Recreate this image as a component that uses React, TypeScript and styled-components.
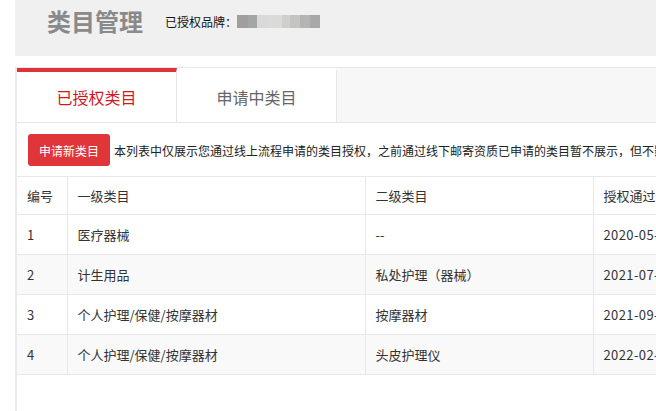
import React from "react";
import styled, { createGlobalStyle } from "styled-components";

const GlobalStyle = createGlobalStyle`
  html, body {
    margin: 0;
    padding: 0;
    background: #ffffff;
    overflow: hidden;
  }
  body {
    font-family: "Noto Sans CJK SC", "Noto Sans", sans-serif;
    color: #333;
  }
`;

const Page = styled.div`
  width: 1000px;
  padding-left: 15px;
  height: 411px;
  overflow: hidden;
`;

const Header = styled.header`
  height: 56px;
  box-sizing: border-box;
  padding: 4px 0 0 32px;
  background: #f0f0f0;
  display: flex;
  align-items: flex-start;
`;

const Title = styled.h1`
  margin: 0 22px 0 0;
  font-size: 24px;
  line-height: 34px;
  font-weight: 700;
  color: #8a8a8a;
`;

const Brand = styled.div`
  display: flex;
  align-items: center;
  height: 34px;
  font-size: 12px;
  color: #111;
`;

const Blurred = styled.span`
  display: inline-block;
  width: 83px;
  height: 13px;
  background: linear-gradient(
    90deg,
    #a19e9d 0 11px,
    #a3a6a4 11px 20px,
    #d9d9d9 20px 32px,
    #dadbd8 32px 45px,
    #cfd0cc 45px 53px,
    #c4c4c1 53px 63px,
    #b4b4b4 63px 73px,
    #a9a8a8 73px 83px
  );
`;

const Panel = styled.section`
  margin-top: 11px;
  border-left: 2px solid #eaeaea;
  height: 400px;
`;

const TabBar = styled.nav`
  display: flex;
  height: 56px;
  box-sizing: border-box;
  background: #f7f7f7;
  border-top: 1px solid #e8e8e8;
  border-bottom: 1px solid #e6e6e6;
`;

const Tab = styled.div<{ $active?: boolean }>`
  width: 160px;
  box-sizing: border-box;
  background: #fff;
  border-right: 1px solid #e6e6e6;
  border-top: 4px solid ${(p) => (p.$active ? "#e03337" : "#fff")};
  display: flex;
  align-items: center;
  justify-content: center;
  font-size: 16px;
  color: ${(p) => (p.$active ? "#d0191f" : "#666")};
`;

const Content = styled.div`
  padding-top: 11px;
`;

const Toolbar = styled.div`
  display: flex;
  align-items: center;
  gap: 4px;
  padding-left: 11px;
  white-space: nowrap;
`;

const PrimaryButton = styled.button`
  height: 32px;
  padding: 0 11px;
  border: none;
  border-radius: 3px;
  background: #e03539;
  color: #fff;
  font-family: inherit;
  font-size: 12px;
  cursor: pointer;
`;

const Notice = styled.span`
  font-size: 12px;
  color: #222;
`;

const Table = styled.table`
  margin-top: 10px;
  border-collapse: collapse;
  table-layout: fixed;
  width: 826px;
  font-size: 13px;
  color: #333;
`;

const Th = styled.th<{ $w: number }>`
  box-sizing: border-box;
  width: ${(p) => p.$w}px;
  height: 38px;
  padding: 0 10px;
  text-align: left;
  font-weight: 400;
  white-space: nowrap;
  border: 1px solid #e8e8e8;
  &:first-child {
    border-left: none;
  }
`;

const Tr = styled.tr<{ $alt?: boolean }>`
  background: ${(p) => (p.$alt ? "#f9f9f9" : "#fff")};
`;

const Td = styled.td`
  height: 40px;
  box-sizing: border-box;
  padding: 0 10px;
  white-space: nowrap;
  overflow: hidden;
  border: 1px solid #e8e8e8;
  &:first-child {
    border-left: none;
  }
`;

const DateText = styled.span`
  letter-spacing: 0.4px;
`;

const columns = [
  { key: "no", label: "编号", w: 50 },
  { key: "first", label: "一级类目", w: 298 },
  { key: "second", label: "二级类目", w: 228 },
  { key: "time", label: "授权通过时间", w: 250 },
];

const rows = [
  { no: "1", first: "医疗器械", second: "--", time: "2020-05-18 10:32:16" },
  { no: "2", first: "计生用品", second: "私处护理（器械）", time: "2021-07-06 14:20:51" },
  { no: "3", first: "个人护理/保健/按摩器材", second: "按摩器材", time: "2021-09-13 09:47:02" },
  { no: "4", first: "个人护理/保健/按摩器材", second: "头皮护理仪", time: "2022-02-21 16:05:38" },
];

export default function App() {
  return (
    <>
      <GlobalStyle />
      <Page>
        <Header>
          <Title>类目管理</Title>
          <Brand>
            已授权品牌：<Blurred />
          </Brand>
        </Header>
        <Panel>
          <TabBar>
            <Tab $active>已授权类目</Tab>
            <Tab>申请中类目</Tab>
          </TabBar>
          <Content>
            <Toolbar>
              <PrimaryButton>申请新类目</PrimaryButton>
              <Notice>
                本列表中仅展示您通过线上流程申请的类目授权，之前通过线下邮寄资质已申请的类目暂不展示，但不影响您正常经营。
              </Notice>
            </Toolbar>
            <Table>
              <thead>
                <tr>
                  {columns.map((c) => (
                    <Th key={c.key} $w={c.w}>
                      {c.label}
                    </Th>
                  ))}
                </tr>
              </thead>
              <tbody>
                {rows.map((r, i) => (
                  <Tr key={r.no} $alt={i % 2 === 1}>
                    <Td>{r.no}</Td>
                    <Td>{r.first}</Td>
                    <Td>{r.second}</Td>
                    <Td>
                      <DateText>{r.time}</DateText>
                    </Td>
                  </Tr>
                ))}
              </tbody>
            </Table>
          </Content>
        </Panel>
      </Page>
    </>
  );
}
